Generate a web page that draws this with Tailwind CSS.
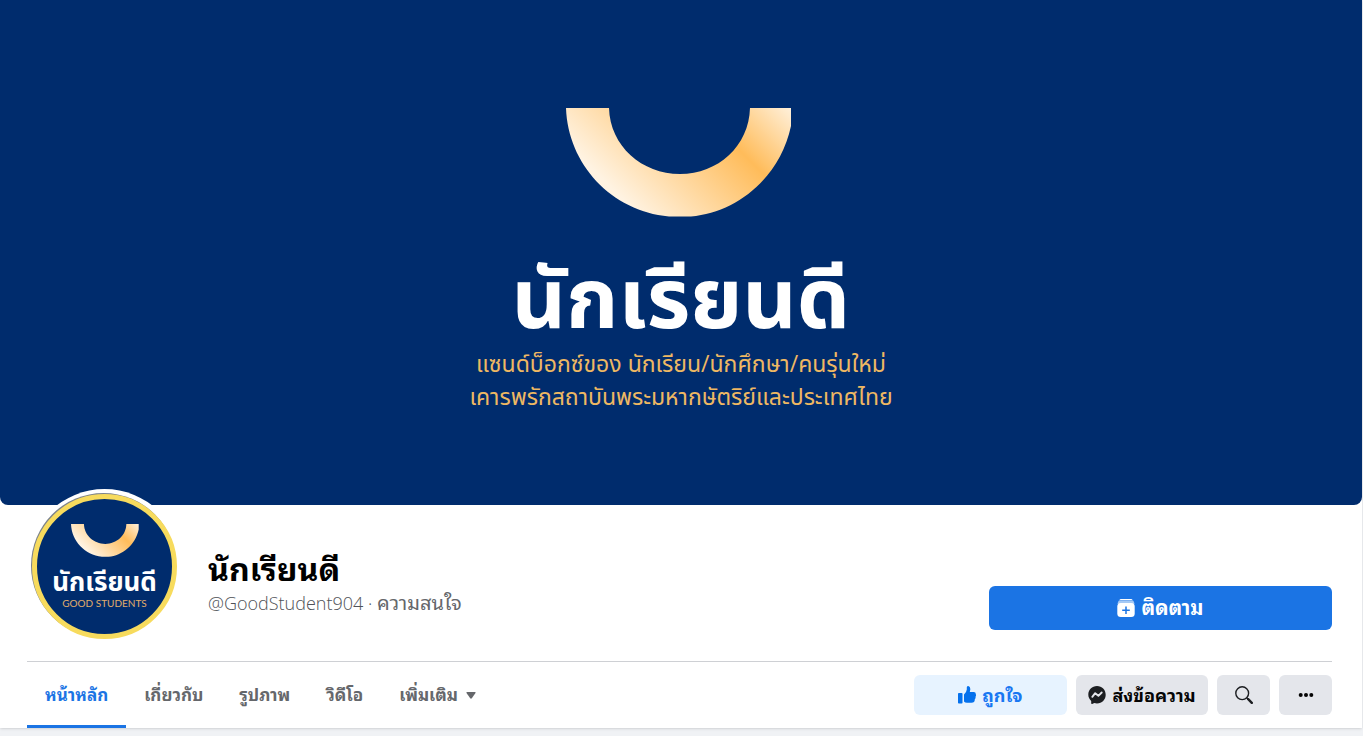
<!DOCTYPE html>
<html lang="th">

<head>
    <meta charset="UTF-8">
    <meta name="viewport" content="width=device-width, initial-scale=1.0">
    <title>นักเรียนดี</title>
    <script src="https://cdn.jsdelivr.net/npm/@tailwindcss/browser@4"></script>
</head>

<body class="min-h-screen bg-[#f0f2f5] font-['Open_Sans','Noto_Sans_Thai_Looped','Leelawadee_UI','Loma','Noto_Sans_Thai',sans-serif]">
    <header class="mr-px bg-white shadow-sm">

        <!-- Cover -->
        <section class="flex h-[505px] flex-col items-center rounded-b-lg bg-[#002c6d] pt-[108px] font-['Open_Sans','Noto_Sans_Thai',sans-serif]">
            <svg class="h-[109px] w-[230px]" viewBox="0 0 230 109" aria-hidden="true">
                <defs>
                    <linearGradient id="smile" gradientUnits="userSpaceOnUse" x1="37" y1="72" x2="167" y2="-58">
                        <stop offset="0" stop-color="#fff3e2" />
                        <stop offset="0.64" stop-color="#ffbc5a" />
                        <stop offset="1" stop-color="#fff0da" />
                    </linearGradient>
                </defs>
                <path fill="url(#smile)" d="M0 0H43C44 38 76 66 114 66C152 66 183 38 184 0H225V18C214 70 170 105 125 108.500H103C45 103 2 56 0 0Z" />
            </svg>
            <p class="mt-[30px] text-[84px] leading-[98px] font-bold text-white">นักเรียนดี</p>
            <p class="mt-[2px] text-center text-[23px] leading-[33px] text-[#eeb863]">
                แซนด์บ็อกซ์ของ นักเรียน/นักศึกษา/คนรุ่นใหม่<br>
                เคารพรักสถาบันพระมหากษัตริย์และประเทศไทย
            </p>
        </section>

        <!-- Profile -->
        <div class="pr-[30px] pl-[27px]">
            <section class="flex h-[157px] items-start border-b border-[#ced0d4]">
                <div class="-mt-4 flex size-[155px] shrink-0 rounded-full bg-white p-[5px]">
                    <div class="flex w-full flex-col items-center rounded-full border-[5px] border-[#f7db5d] bg-[#002c6d] pt-[25px] font-['Open_Sans','Noto_Sans_Thai',sans-serif] shadow-[-1px_-1px_0_#7d838a]">
                        <svg class="h-[33px] w-[68px]" viewBox="0 0 226 109" aria-hidden="true">
                            <path fill="url(#smile)" d="M0 0H43C44 38 76 66 114 66C152 66 183 38 184 0H225V18C214 70 170 105 125 108.500H103C45 103 2 56 0 0Z" />
                        </svg>
                        <p class="mt-2 text-[26px] leading-8 font-bold text-white">นักเรียนดี</p>
                        <p class="font-[Lato,sans-serif] text-[10px] leading-3 text-[#e0ad6b]">GOOD STUDENTS</p>
                    </div>
                </div>
                <div class="mt-11 ml-[26px] flex-1">
                    <h1 class="text-[32px] leading-10 font-bold text-black">นักเรียนดี</h1>
                    <p class="text-lg leading-7 font-light text-[#505257]">@GoodStudent904 · <span class="text-[20px] font-normal text-[#65676b]">ความสนใจ</span></p>
                </div>
                <button class="mt-[81px] flex h-11 w-[343px] items-center justify-center gap-[6px] rounded-md bg-[#1b74e4] text-xl font-bold text-white">
                    <svg class="size-[18px]" viewBox="0 0 18 18" aria-hidden="true">
                        <path fill="#fff" d="M4 0H14Q15.200 0 15.700 1.200H2.300Q2.800 0 4 0Z" />
                        <path fill="#a5c9f5" d="M2 1.600H16Q17 2.500 17.500 5H0.500Q1 2.500 2 1.600Z" />
                        <rect x="0.300" y="4" width="17.400" height="14" rx="3.500" fill="#fff" />
                        <path d="M9 7.500V15M5.200 11.200H12.800" stroke="#1b74e4" stroke-width="1.500" />
                    </svg>
                    ติดตาม
                </button>
            </section>

            <!-- Tabs and actions -->
            <div class="flex h-[66px] items-center justify-between">
                <nav class="flex h-full text-[17px] font-bold text-[#65676b]">
                    <a href="#" class="flex items-center border-b-3 border-[#1b74e4] px-[18px] pt-[3px] text-[#1b74e4]">หน้าหลัก</a>
                    <a href="#" class="flex items-center px-[18px]">เกี่ยวกับ</a>
                    <a href="#" class="flex items-center px-[18px]">รูปภาพ</a>
                    <a href="#" class="flex items-center px-[18px]">วิดีโอ</a>
                    <button class="flex items-center gap-2 px-[18px]">
                        เพิ่มเติม
                        <svg class="h-[7px] w-[10px]" viewBox="0 0 10 7" aria-hidden="true">
                            <path fill="#65676b" d="M1 0H9Q10 0 9.500 1L5.800 6.300Q5 7.200 4.200 6.300L0.500 1Q0 0 1 0Z" />
                        </svg>
                    </button>
                </nav>
                <div class="flex gap-[9px] text-lg font-bold text-[#050505]">
                    <button class="flex h-10 w-[153px] items-center justify-center gap-[6px] rounded-md bg-[#e7f3ff] text-[#1877f2]">
                        <svg class="size-[18px]" viewBox="0 0 18 18" fill="#0571ed" aria-hidden="true">
                            <rect y="7" width="4.500" height="10.500" rx="0.800" />
                            <path d="M6 8.500Q8.500 6.500 8.800 3.500V1.200Q9 0 10.300 0Q12.500 0.500 12.300 3.500L11.800 6H15.800Q18 6.300 17.800 8.200Q18.500 9.500 17.500 10.800Q17.900 12.300 16.800 13.300Q16.900 16.800 13.500 16.800H9Q7 16.800 6 15.500Z" />
                        </svg>
                        ถูกใจ
                    </button>
                    <button class="flex h-10 w-[132px] items-center justify-center gap-[6px] rounded-md bg-[#e4e6eb]">
                        <svg class="size-[18px]" viewBox="0 0 18 18" aria-hidden="true">
                            <path fill="#1c1e21" d="M9 0C4 0 0.300 3.700 0.300 8.500C0.300 11.200 1.400 13.300 3.200 14.900V17.300Q3.300 18.200 4.200 17.900L6.300 17Q7.600 17.400 9 17.400C14 17.400 17.700 13.500 17.700 8.700C17.700 3.700 14 0 9 0Z" />
                            <path fill="none" stroke="#e4e6eb" stroke-width="1.900" stroke-linejoin="round" stroke-linecap="round" d="M4.300 10.800L7.200 7.200L10.400 9.800L13.700 6.500" />
                        </svg>
                        ส่งข้อความ
                    </button>
                    <button class="flex h-10 w-[53px] items-center justify-center rounded-md bg-[#e4e6eb]" aria-label="ค้นหา">
                        <svg class="size-[18px]" viewBox="0 0 18 18" fill="none" stroke="#1c1e21" stroke-linecap="round" aria-hidden="true">
                            <circle cx="7.200" cy="7.200" r="6.400" stroke-width="1.400" />
                            <path d="M12 12L13 13" stroke-width="1.500" />
                            <path d="M13.200 13.200L16.800 16.800" stroke-width="2.400" />
                        </svg>
                    </button>
                    <button class="flex h-10 w-[53px] items-center justify-center rounded-md bg-[#e4e6eb]" aria-label="เพิ่มเติม">
                        <svg class="h-1 w-4" viewBox="0 0 16 4" fill="#050505" aria-hidden="true">
                            <circle cx="2.700" cy="2" r="2" />
                            <circle cx="8" cy="2" r="2" />
                            <circle cx="13.300" cy="2" r="2" />
                        </svg>
                    </button>
                </div>
            </div>
        </div>
    </header>
</body>

</html>
